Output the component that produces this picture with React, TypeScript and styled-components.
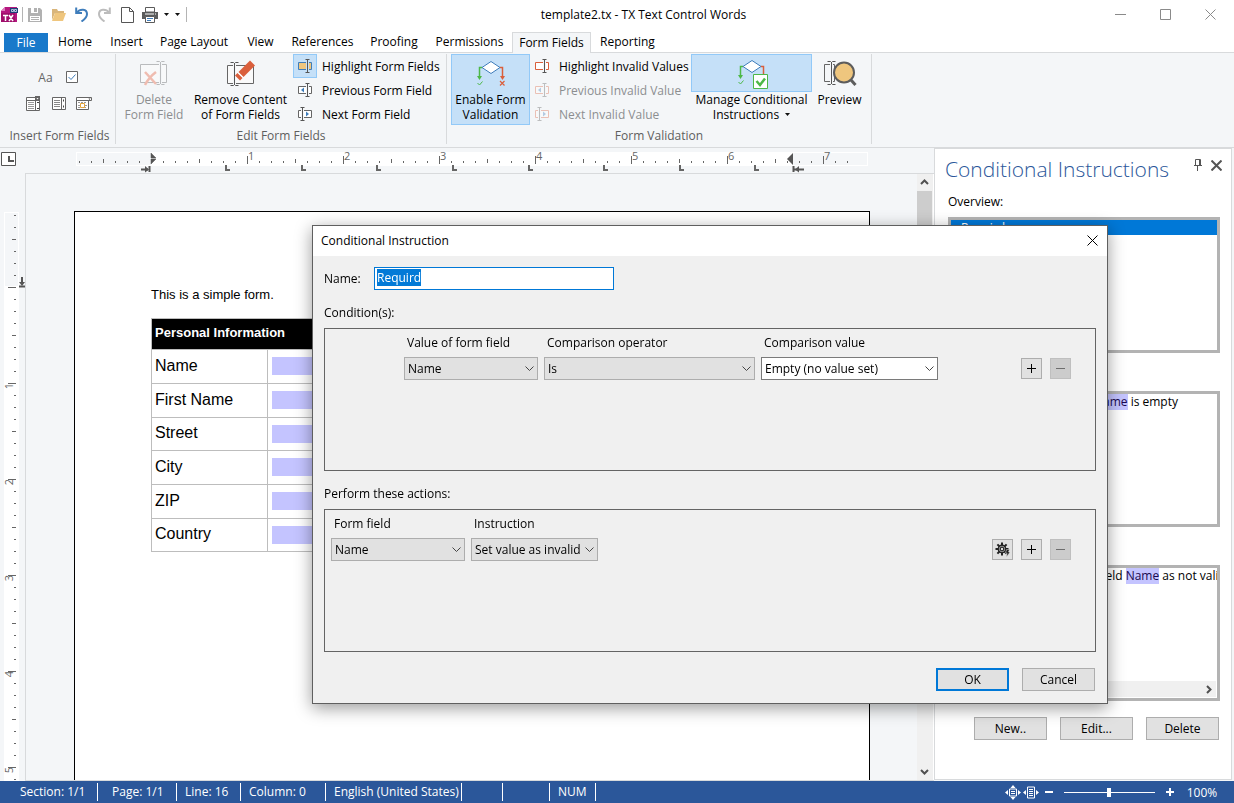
import React, { useEffect, useRef } from "react";
import styled, { createGlobalStyle, css } from "styled-components";

const ui = '"Open Sans", "Noto Sans", sans-serif';
const doc = '"Liberation Sans", Arial, sans-serif';

const GlobalStyle = createGlobalStyle`
  *, *::before, *::after { box-sizing: border-box; }
  body { margin: 0; overflow: hidden; background: #f4f6f8; }
  body, button, input, select { font-family: ${ui}; font-size: 12px; line-height: 15px; color: #000; }
  button { padding: 0; margin: 0; border: 0; background: none; }
  svg { display: block; flex: none; }
  p, h1, h2 { margin: 0; font-weight: 400; font-size: 12px; }
`;

/* ---------- window frame ---------- */

const Window = styled.div`
  height: 100vh;
  display: flex;
  flex-direction: column;
`;

const TitleBar = styled.header`
  height: 29px;
  flex: none;
  display: flex;
  align-items: center;
  background: #fff;
`;

const QuickAccess = styled.div`
  width: 190px;
  display: flex;
  align-items: center;
`;

const QuickButton = styled.button<{ $w: number }>`
  width: ${(p) => p.$w}px;
  height: 24px;
  display: flex;
  align-items: center;
  justify-content: center;
`;

const QuickLine = styled.span<{ $gap: number }>`
  width: 1px;
  height: 15px;
  margin: 0 ${(p) => p.$gap}px;
  background: #b4b4b4;
`;

const WindowTitle = styled.h1`
  flex: 1;
  text-align: center;
  white-space: nowrap;
`;

const WindowButtons = styled.div`
  display: flex;
  width: 137px;
  padding-left: 1px;
`;

const WindowButton = styled.button`
  width: 45px;
  height: 28px;
  display: flex;
  align-items: center;
  justify-content: center;
`;

const TabStrip = styled.nav`
  height: 24px;
  flex: none;
  display: flex;
  align-items: flex-end;
  padding-left: 4px;
  background: #fff;
  box-shadow: inset 0 -1px #d8dadc;
`;

const Tab = styled.button<{ $w: number; $kind?: "file" | "active" }>`
  width: ${(p) => p.$w}px;
  height: 21px;
  padding-bottom: 2px;
  white-space: nowrap;
  ${(p) =>
    p.$kind === "file" &&
    css`
      height: 19px;
      padding-bottom: 0;
      margin-bottom: 1px;
      color: #fff;
      background: #1979ca;
    `}
  ${(p) =>
    p.$kind === "active" &&
    css`
      border: 1px solid #d8dadc;
      border-bottom: 0;
      background: #f4f6f8;
    `}
`;

/* ---------- ribbon ---------- */

const Ribbon = styled.section`
  height: 95px;
  flex: none;
  display: flex;
  padding-left: 4px;
  background: #f4f6f8;
  border-bottom: 1px solid #d8dadc;
`;

const Group = styled.div<{ $w: number }>`
  width: ${(p) => p.$w}px;
  height: 90px;
  margin-top: 1px;
  display: flex;
  flex-direction: column;
  border-right: 1px solid #d8dadc;
`;

const GroupBody = styled.div`
  height: 74px;
  display: flex;
  padding-left: 4px;
`;

const GroupLabel = styled.p`
  text-align: center;
  color: #5e5e5e;
  white-space: nowrap;
`;

const InsertGrid = styled.div`
  display: grid;
  grid-template-columns: 25px 25px 25px;
  grid-template-rows: 26px 26px;
  place-items: center;
  padding: 10px 0 0 13px;
`;

const InsertPair = styled.div`
  grid-column: 1 / -1;
  width: 42px;
  display: flex;
  align-items: center;
  justify-content: space-between;
`;

const InsertButton = styled.button`
  height: 22px;
  min-width: 16px;
  display: flex;
  align-items: center;
  justify-content: center;
  color: #666;
`;

const LargeButton = styled.button<{ $w: number; $pressed?: boolean }>`
  width: ${(p) => p.$w}px;
  height: 71px;
  display: flex;
  flex-direction: column;
  align-items: center;
  border: 1px solid ${(p) => (p.$pressed ? "#92c9f8" : "transparent")};
  background: ${(p) => (p.$pressed ? "#c5e0f8" : "transparent")};
  white-space: nowrap;
  &:disabled { color: #8c8e90; }
`;

const LargeIcon = styled.span<{ $split?: boolean }>`
  height: 37px;
  width: 100%;
  margin: ${(p) => (p.$split ? "-1px -1px 0" : "0")};
  display: flex;
  align-items: center;
  justify-content: center;
  ${(p) =>
    p.$split &&
    css`
      width: 121px;
      height: 38px;
      flex: none;
      border: 1px solid #92c9f8;
      background: #c5e0f8;
    `}
`;

const SmallColumn = styled.div<{ $w: number }>`
  width: ${(p) => p.$w}px;
  display: flex;
  flex-direction: column;
`;

const SmallButton = styled.button`
  height: 24px;
  display: flex;
  align-items: center;
  gap: 5px;
  white-space: nowrap;
  &:disabled { color: #8c8e90; }
`;

const SmallIcon = styled.span<{ $pressed?: boolean }>`
  width: 24px;
  height: 24px;
  display: flex;
  align-items: center;
  justify-content: center;
  border: 1px solid ${(p) => (p.$pressed ? "#92c9f8" : "transparent")};
  background: ${(p) => (p.$pressed ? "#c5e0f8" : "transparent")};
`;

const WithCaret = styled.span`
  display: flex;
  align-items: center;
  gap: 6px;
`;

/* ---------- workspace ---------- */

const Workspace = styled.main`
  flex: 1;
  min-height: 0;
  display: flex;
  padding-right: 2px;
`;

const Editor = styled.section`
  flex: 1;
  min-width: 0;
  display: grid;
  grid-template-columns: 25px 1fr;
  grid-template-rows: 25px 1fr;
  overflow: hidden;
`;

const RulerCorner = styled.div`
  padding: 4px 0 0 1px;
`;

const RulerTrack = styled.div`
  overflow: hidden;
`;

const Canvas = styled.div`
  display: flex;
  min-height: 0;
  border: 1px solid #d8dadc;
  border-right: 0;
`;

const PageArea = styled.div`
  flex: 1;
  overflow: hidden;
  padding: 37px 47px 0 48px;
`;

const Page = styled.article`
  height: 1056px;
  padding: 75px 76px;
  border: 1px solid #000;
  background: #fff;
  font-family: ${doc};
`;

const Paragraph = styled.p`
  font-size: 13px;
  line-height: 15px;
  padding-bottom: 16px;
`;

const FormTable = styled.table`
  width: 100%;
  border-collapse: collapse;
  font-family: ${doc};
  font-size: 16px;
  line-height: 20px;
  th, td { border: 1px solid #bdbdbd; padding: 0 4px 1px; text-align: left; font-weight: 400; }
  thead th { height: 31px; padding: 0 3px 2px; background: #000; color: #fff; font-size: 13px; font-weight: 700; }
  tbody th { width: 116px; height: 34px; padding: 0 3px 2px; }
  tbody tr:nth-child(3n) th { height: 33px; }
`;

const FormField = styled.input`
  display: block;
  width: 100%;
  height: 18px;
  border: 0;
  border-radius: 0;
  background: #c4c4ff;
`;

const VScroll = styled.div`
  width: 17px;
  display: flex;
  flex-direction: column;
  justify-content: space-between;
  background: #f0f0f0;
  border-right: 1px solid #fff;
`;

const ScrollArrow = styled.button`
  height: 17px;
  width: 15px;
  display: flex;
  align-items: center;
  justify-content: center;
`;

const ScrollThumb = styled.div`
  height: 300px;
  width: 15px;
  background: #cdcdcd;
  margin-bottom: auto;
`;

/* ---------- side panel ---------- */

const SidePanel = styled.aside`
  width: 298px;
  flex: none;
  display: flex;
  flex-direction: column;
  margin-bottom: 1px;
  padding: 6px 12px 0 13px;
  border: 1px solid #d8dadc;
  background: #fff;
`;

const PanelHead = styled.div`
  display: flex;
  margin: 0 -7px 0 -3px;
  height: 32px;
`;

const PanelTitle = styled.h2`
  flex: 1;
  font-size: 21px;
  line-height: 29px;
  font-weight: 300;
  color: #2b579a;
  white-space: nowrap;
`;

const PanelTool = styled.button`
  width: 19px;
  height: 20px;
  display: flex;
  align-items: center;
  justify-content: center;
`;

const PanelLabel = styled.p`
  height: 38px;
  padding-top: 15px;
  line-height: 15px;
  &:first-of-type { height: 30px; padding-top: 7px; }
`;

const PanelBox = styled.div`
  position: relative;
  height: 136px;
  margin: 0 -1px 0 0;
  border: 3px solid #b3b3b3;
  background: #fff;
  overflow: hidden;
  white-space: nowrap;
`;

const PanelItem = styled.div`
  height: 15px;
  padding-left: 10px;
  background: #0078d7;
  color: #fff;
`;

const Rule = styled.p`
  height: 17px;
  padding: 0 0 0 6px;
  line-height: 16px;
`;

const FieldMark = styled.mark`
  background: #c4c4ff;
  color: #1a0a50;
`;

const HScroll = styled.div`
  position: absolute;
  left: 0;
  right: 1px;
  bottom: 1px;
  height: 16px;
  display: flex;
  justify-content: flex-end;
  background: #f0f0f0;
`;

const ButtonRow = styled.div`
  display: flex;
  justify-content: flex-end;
  gap: 13px;
`;

const PanelActions = styled(ButtonRow)`
  margin-top: 16px;
`;

const PushButton = styled.button<{ $default?: boolean }>`
  width: 73px;
  height: 23px;
  border: ${(p) => (p.$default ? "2px solid #0078d7" : "1px solid #adadad")};
  background: #e1e1e1;
`;

/* ---------- dialog ---------- */

const Dialog = styled.section`
  position: fixed;
  top: 225px;
  left: 312px;
  right: 126px;
  border: 1px solid #5f5f5f;
  background: #f0f0f0;
  box-shadow: 0 4px 16px rgba(0, 0, 0, 0.4);
`;

const DialogHead = styled.div`
  height: 30px;
  display: flex;
  align-items: center;
  justify-content: space-between;
  padding: 0 0 2px 8px;
  background: #fff;
`;

const DialogClose = styled.button`
  width: 29px;
  height: 28px;
  display: flex;
  align-items: center;
  justify-content: center;
`;

const DialogBody = styled.div`
  padding: 11px 11px 12px;
`;

const NameRow = styled.div`
  height: 23px;
  display: flex;
  align-items: center;
  label { width: 50px; }
`;

const NameInput = styled.input`
  width: 240px;
  height: 23px;
  padding: 0 2px 3px;
  border: 1px solid #0078d7;
  border-radius: 0;
  background: #fff;
  outline: none;
  &::selection { background: rgba(0, 120, 215, 0.99); color: #fff; }
`;

const SectionTitle = styled.h2`
  height: 38px;
  padding-top: 15px;
  line-height: 15px;
`;

const Frame = styled.div<{ $indent: number }>`
  height: 143px;
  display: flex;
  align-items: flex-start;
  gap: 6px;
  padding: 6px 24px 0 ${(p) => p.$indent}px;
  border: 1px solid #646464;
`;

const Picker = styled.div<{ $w: number }>`
  width: ${(p) => p.$w}px;
  label { display: block; height: 22px; padding-left: 3px; line-height: 16px; white-space: nowrap; }
`;

const SelectBox = styled.div`
  position: relative;
  svg { position: absolute; right: 4px; top: 9px; pointer-events: none; }
`;

const Select = styled.select<{ $editable?: boolean }>`
  appearance: none;
  display: block;
  width: 100%;
  height: 23px;
  padding: 0 13px 0 3px;
  border: 1px solid ${(p) => (p.$editable ? "#7a7a7a" : "#adadad")};
  border-radius: 0;
  background: ${(p) => (p.$editable ? "#fff" : "#e1e1e1")};
`;

const RowTools = styled.div`
  margin-left: auto;
  padding-top: 23px;
  display: flex;
  gap: 8px;
`;

const ToolButton = styled.button`
  width: 21px;
  height: 21px;
  display: flex;
  align-items: center;
  justify-content: center;
  border: 1px solid #adadad;
  background: #e1e1e1;
  &:disabled { background: #cccccc; border-color: #bfbfbf; }
`;

const DialogActions = styled(ButtonRow)`
  padding: 16px 1px 0 0;
`;

/* ---------- status bar ---------- */

const StatusBar = styled.footer`
  height: 22px;
  flex: none;
  display: flex;
  align-items: center;
  background: #2b579a;
  color: #fff;
`;

const StatusCell = styled.span<{ $w: number; $pad?: number }>`
  width: ${(p) => p.$w}px;
  height: 18px;
  padding-left: ${(p) => p.$pad ?? 8}px;
  border-right: 1px solid #fff;
  line-height: 18px;
  white-space: nowrap;
`;

const ZoomTools = styled.div`
  margin-left: auto;
  display: flex;
  align-items: center;
  padding-right: 9px;
`;

const ZoomButton = styled.button<{ $w: number }>`
  width: ${(p) => p.$w}px;
  height: 20px;
  display: flex;
  align-items: center;
  justify-content: center;
`;

const ZoomSlider = styled.input`
  appearance: none;
  width: 91px;
  height: 20px;
  margin: 0 6px;
  background: linear-gradient(#fff, #fff) center / 100% 1px no-repeat;
  &::-webkit-slider-thumb { appearance: none; width: 4px; height: 9px; background: #fff; }
`;

const ZoomValue = styled.span`
  width: 46px;
  text-align: center;
`;

/* ---------- icons ---------- */

const AppLogo = () => (
  <svg width="17" height="16" viewBox="0 0 17 16">
    <path d="M4 0h12v15H0V4z" fill="#b5177f" />
    <path d="M0 6h14v9H0z" fill="#a00f6c" />
    <path d="M4 0v4H0z" fill="#dd7dbd" />
    <rect x="9" y="1" width="8" height="5" fill="#1d3f77" />
    <path d="M10.500 2.500h2v2h-2zM13.500 2.500h2v2h-2z" fill="none" stroke="#d5e2f5" strokeWidth="0.800" />
    <path d="M2 8.500h5M4.500 8.500v5.500M8 8l4 6M12 8l-4 6" stroke="#fff" strokeWidth="1.500" />
  </svg>
);

const SaveIcon = () => (
  <svg width="14" height="14" viewBox="0 0 14 14">
    <path d="M0 0h12l2 2v12H0z" fill="#b1b1b1" />
    <path d="M3 0h7v5H3z" fill="#fff" />
    <path d="M6 0h3v4H6z" fill="#b1b1b1" />
    <path d="M2 8h10v5H2z" fill="#fff" />
    <path d="M3 9.500h8M3 11.500h8" stroke="#b1b1b1" />
  </svg>
);

const FolderIcon = () => (
  <svg width="14" height="12" viewBox="0 0 14 12">
    <path d="M0 0h5l1 2h6v2H3L0 11z" fill="#d9b57a" />
    <path d="M3 4h11l-3 8H0z" fill="#efc67e" />
  </svg>
);

const UndoIcon = ({ color, flip }: { color: string; flip?: boolean }) => (
  <svg width="14" height="15" viewBox="0 0 14 15">
    <g transform={flip ? "matrix(-1 0 0 1 14 0)" : undefined} fill="none" stroke={color} strokeWidth="2">
      <path d="M2 5.500C5 1.500 12 1.500 12 7c0 3.500-2.500 5.500-5.500 7.500" />
      <path d="M1.200 0.500v5.500h5.800" />
    </g>
  </svg>
);

const NewPageIcon = () => (
  <svg width="13" height="16" viewBox="0 0 13 16">
    <path d="M0.500 0.500h8l4 4v11h-12zM8.500 0.500v4h4" fill="#fff" stroke="#555" />
  </svg>
);

const PrintIcon = () => (
  <svg width="16" height="16" viewBox="0 0 16 16">
    <path d="M0 5h16v7H0z" fill="#5b5b5b" />
    <path d="M3.500 0.500h9v4.500h-9z" fill="#fff" stroke="#5b5b5b" />
    <path d="M3 7h9" stroke="#fff" />
    <path d="M13 7h1" stroke="#fff" />
    <path d="M3.500 9.500h9v6h-9z" fill="#fff" stroke="#5b5b5b" />
    <path d="M5 11.500h6M5 13.500h4" stroke="#3f7dbb" />
  </svg>
);

const CaretIcon = () => (
  <svg width="5" height="3" viewBox="0 0 5 3">
    <path d="M0 0h5L2.500 3z" fill="#111" />
  </svg>
);

const MinimizeIcon = () => (
  <svg width="11" height="11" viewBox="0 0 11 11">
    <path d="M0 5.500h11" stroke="#8a8a8a" />
  </svg>
);

const MaximizeIcon = () => (
  <svg width="11" height="11" viewBox="0 0 11 11">
    <path d="M0.500 0.500h10v10h-10z" fill="none" stroke="#8a8a8a" />
  </svg>
);

const CrossIcon = ({ size = 11, color = "#8a8a8a", width = 1 }) => (
  <svg width={size} height={size} viewBox="0 0 11 11">
    <path d="M0.500 0.500l10 10M10.500 0.500l-10 10" fill="none" stroke={color} strokeWidth={width} />
  </svg>
);

const CheckFieldIcon = () => (
  <svg width="12" height="12" viewBox="0 0 12 12">
    <path d="M0.500 0.500h11v11h-11z" fill="#fff" stroke="#666" />
    <path d="M2.500 6l2.500 2.500 4.500-5" fill="none" stroke="#3f7dbb" />
  </svg>
);

const ComboFieldIcon = () => (
  <svg width="15" height="15" viewBox="0 0 15 15">
    <path d="M0.500 1.500h13v13h-13zM0 4.500h14M9.500 4v10" fill="#fff" stroke="#666" />
    <path d="M9 0h5v5H9z" fill="#666" />
    <path d="M10.500 2h2l-1 1.500z" fill="#fff" />
    <path d="M2 6.500h6M2 8.500h6M2 10.500h6M2 12.500h6" stroke="#999" />
    <path d="M11 6.500h2M11 12.500h2" stroke="#444" />
  </svg>
);

const ListFieldIcon = () => (
  <svg width="14" height="13" viewBox="0 0 14 13">
    <path d="M0.500 0.500h13v12h-13zM9.500 0v12" fill="#fff" stroke="#666" />
    <path d="M2 3.500h6M2 5.500h6M2 7.500h6M2 9.500h6" stroke="#888" />
    <path d="M11 3.500h1M11 9.500h1" stroke="#444" strokeWidth="2" />
  </svg>
);

const DateFieldIcon = () => (
  <svg width="16" height="13" viewBox="0 0 16 13">
    <path d="M0.500 0.500h15v3h-15zM0.500 3.500h12v9h-12z" fill="#fff" stroke="#666" />
    <path d="M12.500 1.500h2l-1 1.500z" fill="#444" />
    <path d="M2 5.500h9M2 8.500h2M2 10.500h9M9 8.500h2" stroke="#999" strokeDasharray="2 1" />
    <path d="M4.500 6.500h4v4h-4z" fill="#fff" stroke="#e5a53c" />
  </svg>
);

type FieldIconProps = {
  frame?: string;
  fill?: string;
  back?: string;
  arrow?: "left" | "right";
  faded?: boolean;
};

const FieldIcon = ({ frame = "#666", fill = "#fff", back = "#f4f6f8", arrow, faded }: FieldIconProps) => {
  const bar = arrow === "right" ? 4.5 : 9.5;
  return (
    <svg width="14" height="14" viewBox="0 0 14 14" opacity={faded ? 0.35 : 1}>
      <path d="M0.500 3.500h13v7h-13z" fill={fill} stroke={frame} />
      <path d={`M${bar} 2v10`} stroke={back} strokeWidth="3" />
      <path d={`M${bar} 1v12M${bar - 2} 0.500h4M${bar - 2} 13.500h4`} stroke="#555" />
      {arrow === "left" && <path d="M6 4.500v5L3 7z" fill="#3f7dbb" />}
      {arrow === "right" && <path d="M8 4.500v5l3-2.500z" fill="#3f7dbb" />}
    </svg>
  );
};

const DeleteFieldIcon = () => (
  <svg width="32" height="28" viewBox="0 0 32 28">
    <path d="M2.500 4.500h26v18h-26z" fill="#f8f9fa" stroke="#b9bbbd" />
    <path d="M22.500 2v23" stroke="#f4f6f8" strokeWidth="3" />
    <path d="M22.500 2v22M18.500 1.500h3l1 1 1-1h3M18.500 24.500h3l1-1 1 1h3" fill="none" stroke="#b9bbbd" />
    <path d="M7 12l11 12M18 12c-4 3-8 7-11 13" stroke="#efbcb0" strokeWidth="2.500" fill="none" />
  </svg>
);

const RemoveContentIcon = () => (
  <svg width="32" height="28" viewBox="0 0 32 28">
    <path d="M2.500 5.500h26v18h-26z" fill="#fafafa" stroke="#666" />
    <path d="M9.500 3v22" stroke="#f4f6f8" strokeWidth="3" />
    <path d="M9.500 3v22M5.500 2.500h3l1 1 1-1h3M5.500 25.500h3l1-1 1 1h3" fill="none" stroke="#555" />
    <path d="M25 0.500l5 5-11.500 11.500-5-5z" fill="#da5f3c" />
    <path d="M12.500 13l5 5-2.500 2.500-5-5z" fill="#da5f3c" />
    <path d="M13 12.500l5 5" stroke="#fff" />
  </svg>
);

const FlowIcon = ({ managed }: { managed?: boolean }) => (
  <svg width="32" height="32" viewBox="0 0 32 32">
    <path d="M7 9.500H4.500V20" fill="none" stroke="#4db848" strokeWidth="1.500" />
    <path d="M2 18h5l-2.500 4z" fill="#4db848" />
    <path d="M2.500 25l2 2 3-3.500" fill="none" stroke="#4db848" />
    <path d="M25 9.500h2.500V20" fill="none" stroke="#da5f3c" strokeWidth="1.500" />
    {!managed && <path d="M25 18h5l-2.500 4z" fill="#da5f3c" />}
    {!managed && <path d="M25 23l4.500 4.500M29.500 23L25 27.500" stroke="#da5f3c" strokeWidth="1.200" />}
    <path d="M7 9.500L16 3.500l9 6-9 6z" fill="#fff" stroke="#3f7dbb" />
    {managed && (
      <>
        <path d="M17.500 17.500h14v14h-14z" fill="#fff" stroke="#4db848" />
        <path d="M20.500 24l3.500 4 5-6.500" fill="none" stroke="#4db848" strokeWidth="2.500" />
      </>
    )}
  </svg>
);

const PreviewIcon = () => (
  <svg width="34" height="28" viewBox="0 0 34 28">
    <path d="M1.500 4.500h10v17h-10z" fill="none" stroke="#666" />
    <path d="M8.500 2v22" stroke="#f4f6f8" strokeWidth="3" />
    <path d="M8.500 2v22M4.500 1.500h3l1 1 1-1h3M4.500 24.500h3l1-1 1 1h3" fill="none" stroke="#555" />
    <circle cx="21" cy="12.500" r="10" fill="#efc67e" stroke="#5d5d5d" strokeWidth="2" />
    <path d="M28 20l4.500 5" stroke="#5d5d5d" strokeWidth="3" />
  </svg>
);

const TabStopIcon = () => (
  <svg width="15" height="14" viewBox="0 0 15 14">
    <path d="M0.500 0.500h14v13h-14z" fill="#fff" stroke="#555" />
    <path d="M8 4v5h5" fill="none" stroke="#555" strokeWidth="2" />
  </svg>
);

const ChevronDown = () => (
  <svg width="9" height="6" viewBox="0 0 9 6">
    <path d="M0.500 0.500l4 4 4-4" fill="none" stroke="#444" />
  </svg>
);

const ScrollChevron = ({ turn }: { turn: number }) => (
  <svg width="9" height="9" viewBox="0 0 9 9">
    <path d="M1 6l3.500-3.500L8 6" fill="none" stroke="#505050" strokeWidth="2" transform={`rotate(${turn} 4.500 4.500)`} />
  </svg>
);

const PinIcon = () => (
  <svg width="8" height="12" viewBox="0 0 8 12">
    <path d="M1.500 0.500h5v6h-5zM0 6.500h8M3.500 7v5" fill="none" stroke="#555" />
    <path d="M5.500 1v5" stroke="#555" />
  </svg>
);

const PlusIcon = () => (
  <svg width="9" height="9" viewBox="0 0 9 9">
    <path d="M0 4.500h9M4.500 0v9" stroke="#000" />
  </svg>
);

const MinusIcon = () => (
  <svg width="9" height="9" viewBox="0 0 9 9">
    <path d="M0 4.500h9" stroke="#6d6d6d" />
  </svg>
);

const GearIcon = () => (
  <svg width="15" height="15" viewBox="0 0 15 15">
    <circle cx="7" cy="7" r="2.800" fill="none" stroke="#222" strokeWidth="3.200" />
    <circle cx="7" cy="7" r="2.800" fill="none" stroke="#e1e1e1" strokeWidth="0.600" />
    <path
      d="M7 0.500v3M7 10.500v3M0.500 7h3M10.500 7h3M2.400 2.400l2.100 2.100M9.500 9.500l2.100 2.100M2.400 11.600l2.100-2.100M9.500 4.500l2.100-2.100"
      stroke="#222"
      strokeWidth="2"
    />
    <path d="M11.500 7.500h3l-1 2.500H15l-3.500 5 0.500-4h-1.500z" fill="#222" stroke="#e1e1e1" strokeWidth="0.500" />
  </svg>
);

const FitIcon = ({ vertical }: { vertical?: boolean }) => (
  <svg width="16" height="15" viewBox="0 0 16 15">
    <path d={vertical ? "M4.500 4h7v7h-7z" : "M4.500 2h7v11h-7z"} fill="none" stroke="#fff" />
    <path d={vertical ? "M6 6.500h4M6 8.500h4" : "M6 4.500h4M6 6.500h4M6 8.500h4M6 10.500h4"} stroke="#fff" />
    <path d="M3 5v5L0 7.500zM13 5v5l3-2.500z" fill="#fff" />
    {vertical && <path d="M5.500 3h5L8 0zM5.500 12h5L8 15z" fill="#fff" />}
  </svg>
);

const ZoomSign = ({ plus }: { plus?: boolean }) => (
  <svg width="8" height="8" viewBox="0 0 8 8">
    <path d={plus ? "M0 4h8M4 0v8" : "M0 4h8"} stroke="#fff" strokeWidth="2" />
  </svg>
);

/* ---------- rulers ---------- */

const steps = (from: number, to: number) => {
  const out: { at: number; size: number }[] = [];
  for (let i = from; i <= to; i++) {
    if (i === 0) continue;
    out.push({ at: i * 12, size: i % 8 === 0 ? 8 : i % 4 === 0 ? 4 : 2 });
  }
  return out;
};

const tabStops = [74, 150, 225, 301, 377, 452, 528, 603];

const HorizontalRuler = () => (
  <svg width="860" height="25" viewBox="-126 0 860 25">
    <rect x="-75" y="4" width="792" height="14" fill="#fff" />
    <rect x="-74" y="5" width="74" height="12" fill="#f4f6f8" />
    <rect x="642" y="5" width="74" height="12" fill="#f4f6f8" />
    <g fill="#666">
      {steps(-6, 58).map((t) => (
        <rect key={t.at} x={t.at} y={15 - t.size + (t.size === 8 ? 1 : 0)} width="1" height={t.size} />
      ))}
    </g>
    <g fill="#666" fontFamily={ui} fontSize="11">
      {[1, 2, 3, 4, 5, 6, 7].map((n) => (
        <text key={n} x={n * 96 + 1} y="12">{n}</text>
      ))}
    </g>
    <path d="M0 5l5 5H0zM0 16l5-5H0z" fill="#555" stroke="#555" strokeWidth="0.500" />
    <path d="M642 5v12l-6-6z" fill="#555" />
    <path d="M-10 21.500h7M-1.500 18v6" stroke="#555" strokeWidth="2" />
    <path d="M-6 18l4 3.500-4 3z" fill="#555" />
    <path d="M643 21.500h10M642.500 18v6" stroke="#555" strokeWidth="2" />
    <path d="M648 18l-4 3.500 4 3z" fill="#555" />
    {tabStops.map((x) => (
      <path key={x} d={`M${x + 1} 17v5h4`} fill="none" stroke="#666" strokeWidth="2" />
    ))}
  </svg>
);

const VerticalRuler = () => (
  <svg width="25" height="608" viewBox="0 -114 25 608">
    <rect x="4" y="-75" width="15" height="700" fill="#fff" />
    <rect x="5" y="-74" width="13" height="73" fill="#f4f6f8" />
    <g fill="#666">
      <rect x="8" y="0" width="8" height="1" />
      {steps(-6, 41).map((t) => (
        <rect key={t.at} x={16 - t.size} y={t.at} width={t.size} height="1" />
      ))}
    </g>
    <g fill="#666" fontFamily={ui} fontSize="11" textAnchor="end">
      {[1, 2, 3, 4, 5].map((n) => (
        <text key={n} transform={`translate(13 ${n * 96}) rotate(-90)`}>{n}</text>
      ))}
    </g>
    <path d="M22 -10v6M19 -0.500h6" stroke="#555" strokeWidth="2" />
    <path d="M19 -5h6l-3 4z" fill="#555" />
  </svg>
);

/* ---------- composed parts ---------- */

type ComboProps = { id: string; label: string; value: string; width: number; editable?: boolean };

const Combo = ({ id, label, value, width, editable }: ComboProps) => (
  <Picker $w={width}>
    <label htmlFor={id}>{label}</label>
    <SelectBox>
      <Select id={id} $editable={editable} defaultValue={value}>
        <option>{value}</option>
      </Select>
      <ChevronDown />
    </SelectBox>
  </Picker>
);

const tabs: { name: string; w: number; kind?: "file" | "active" }[] = [
  { name: "File", w: 44, kind: "file" },
  { name: "Home", w: 54 },
  { name: "Insert", w: 49 },
  { name: "Page Layout", w: 86 },
  { name: "View", w: 47 },
  { name: "References", w: 77 },
  { name: "Proofing", w: 66 },
  { name: "Permissions", w: 85 },
  { name: "Form Fields", w: 79, kind: "active" },
  { name: "Reporting", w: 73 },
];

const rows = ["Name", "First Name", "Street", "City", "ZIP", "Country"];

const RibbonBar = () => (
  <Ribbon>
    <Group $w={112}>
      <GroupBody>
        <InsertGrid>
          <InsertPair>
            <InsertButton>Aa</InsertButton>
            <InsertButton aria-label="Check box"><CheckFieldIcon /></InsertButton>
          </InsertPair>
          <InsertButton aria-label="Combo box"><ComboFieldIcon /></InsertButton>
          <InsertButton aria-label="Drop-down list"><ListFieldIcon /></InsertButton>
          <InsertButton aria-label="Date picker"><DateFieldIcon /></InsertButton>
        </InsertGrid>
      </GroupBody>
      <GroupLabel>Insert Form Fields</GroupLabel>
    </Group>

    <Group $w={331}>
      <GroupBody>
        <LargeButton $w={68} disabled>
          <LargeIcon><DeleteFieldIcon /></LargeIcon>
          <span>Delete</span>
          <span>Form Field</span>
        </LargeButton>
        <LargeButton $w={105}>
          <LargeIcon><RemoveContentIcon /></LargeIcon>
          <span>Remove Content</span>
          <span>of Form Fields</span>
        </LargeButton>
        <SmallColumn $w={150}>
          <SmallButton>
            <SmallIcon $pressed><FieldIcon frame="#3f7dbb" fill="#efc67e" back="#c5e0f8" /></SmallIcon>
            Highlight Form Fields
          </SmallButton>
          <SmallButton>
            <SmallIcon><FieldIcon arrow="left" /></SmallIcon>
            Previous Form Field
          </SmallButton>
          <SmallButton>
            <SmallIcon><FieldIcon arrow="right" /></SmallIcon>
            Next Form Field
          </SmallButton>
        </SmallColumn>
      </GroupBody>
      <GroupLabel>Edit Form Fields</GroupLabel>
    </Group>

    <Group $w={425}>
      <GroupBody>
        <LargeButton $w={79} $pressed>
          <LargeIcon><FlowIcon /></LargeIcon>
          <span>Enable Form</span>
          <span>Validation</span>
        </LargeButton>
        <SmallColumn $w={161}>
          <SmallButton>
            <SmallIcon><FieldIcon frame="#da5f3c" /></SmallIcon>
            Highlight Invalid Values
          </SmallButton>
          <SmallButton disabled>
            <SmallIcon><FieldIcon frame="#da5f3c" arrow="left" faded /></SmallIcon>
            Previous Invalid Value
          </SmallButton>
          <SmallButton disabled>
            <SmallIcon><FieldIcon frame="#da5f3c" arrow="right" faded /></SmallIcon>
            Next Invalid Value
          </SmallButton>
        </SmallColumn>
        <LargeButton $w={121}>
          <LargeIcon $split><FlowIcon managed /></LargeIcon>
          <span>Manage Conditional</span>
          <WithCaret>Instructions <CaretIcon /></WithCaret>
        </LargeButton>
        <LargeButton $w={55}>
          <LargeIcon><PreviewIcon /></LargeIcon>
          <span>Preview</span>
        </LargeButton>
      </GroupBody>
      <GroupLabel>Form Validation</GroupLabel>
    </Group>
  </Ribbon>
);

const DocumentEditor = () => (
  <Editor>
    <RulerCorner><TabStopIcon /></RulerCorner>
    <RulerTrack><HorizontalRuler /></RulerTrack>
    <RulerTrack><VerticalRuler /></RulerTrack>
    <Canvas>
      <PageArea>
        <Page>
          <Paragraph>This is a simple form.</Paragraph>
          <FormTable>
            <thead>
              <tr><th colSpan={2}>Personal Information</th></tr>
            </thead>
            <tbody>
              {rows.map((name) => (
                <tr key={name}>
                  <th scope="row">{name}</th>
                  <td><FormField aria-label={name} /></td>
                </tr>
              ))}
            </tbody>
          </FormTable>
        </Page>
      </PageArea>
      <VScroll>
        <ScrollArrow aria-label="Scroll up"><ScrollChevron turn={0} /></ScrollArrow>
        <ScrollThumb />
        <ScrollArrow aria-label="Scroll down"><ScrollChevron turn={180} /></ScrollArrow>
      </VScroll>
    </Canvas>
  </Editor>
);

const InstructionsPanel = () => (
  <SidePanel>
    <PanelHead>
      <PanelTitle>Conditional Instructions</PanelTitle>
      <PanelTool aria-label="Pin"><PinIcon /></PanelTool>
      <PanelTool aria-label="Close panel"><CrossIcon color="#555" width={2} /></PanelTool>
    </PanelHead>
    <PanelLabel>Overview:</PanelLabel>
    <PanelBox>
      <PanelItem>Requird</PanelItem>
    </PanelBox>
    <PanelLabel>Conditions:</PanelLabel>
    <PanelBox>
      <Rule>If the value of form field <FieldMark>Name</FieldMark> is empty</Rule>
    </PanelBox>
    <PanelLabel>Instructions:</PanelLabel>
    <PanelBox>
      <Rule>Set the value of the form field <FieldMark>Name</FieldMark> as not valid.</Rule>
      <HScroll>
        <ScrollArrow aria-label="Scroll right"><ScrollChevron turn={90} /></ScrollArrow>
      </HScroll>
    </PanelBox>
    <PanelActions>
      <PushButton>New..</PushButton>
      <PushButton>Edit...</PushButton>
      <PushButton>Delete</PushButton>
    </PanelActions>
  </SidePanel>
);

const InstructionDialog = () => {
  const nameRef = useRef<HTMLInputElement>(null);
  useEffect(() => {
    nameRef.current?.focus();
    nameRef.current?.select();
  }, []);
  return (
    <Dialog role="dialog" aria-labelledby="dialog-title">
      <DialogHead>
        <h2 id="dialog-title">Conditional Instruction</h2>
        <DialogClose aria-label="Close"><CrossIcon color="#000" /></DialogClose>
      </DialogHead>
      <DialogBody>
        <NameRow>
          <label htmlFor="name">Name:</label>
          <NameInput id="name" ref={nameRef} defaultValue="Requird" />
        </NameRow>
        <SectionTitle>Condition(s):</SectionTitle>
        <Frame $indent={79}>
          <Combo id="cond-field" label="Value of form field" value="Name" width={134} />
          <Combo id="cond-op" label="Comparison operator" value="Is" width={211} />
          <Combo id="cond-value" label="Comparison value" value="Empty (no value set)" width={177} editable />
          <RowTools>
            <ToolButton aria-label="Add condition"><PlusIcon /></ToolButton>
            <ToolButton aria-label="Remove condition" disabled><MinusIcon /></ToolButton>
          </RowTools>
        </Frame>
        <SectionTitle>Perform these actions:</SectionTitle>
        <Frame $indent={6}>
          <Combo id="act-field" label="Form field" value="Name" width={134} />
          <Combo id="act-instr" label="Instruction" value="Set value as invalid" width={127} />
          <RowTools>
            <ToolButton aria-label="Action settings"><GearIcon /></ToolButton>
            <ToolButton aria-label="Add action"><PlusIcon /></ToolButton>
            <ToolButton aria-label="Remove action" disabled><MinusIcon /></ToolButton>
          </RowTools>
        </Frame>
        <DialogActions>
          <PushButton $default>OK</PushButton>
          <PushButton>Cancel</PushButton>
        </DialogActions>
      </DialogBody>
    </Dialog>
  );
};

export default function App() {
  return (
    <Window>
      <GlobalStyle />
      <TitleBar>
        <QuickAccess>
          <QuickButton $w={18} aria-label="Application"><AppLogo /></QuickButton>
          <QuickLine $gap={4} />
          <QuickButton $w={16} aria-label="Save"><SaveIcon /></QuickButton>
          <QuickButton $w={32} aria-label="Open"><FolderIcon /></QuickButton>
          <QuickButton $w={14} aria-label="Undo"><UndoIcon color="#3f7dbb" /></QuickButton>
          <QuickButton $w={30} aria-label="Redo"><UndoIcon color="#bcbcbc" flip /></QuickButton>
          <QuickButton $w={17} aria-label="New document"><NewPageIcon /></QuickButton>
          <QuickButton $w={28} aria-label="Print"><PrintIcon /></QuickButton>
          <QuickButton $w={5} aria-label="Print options"><CaretIcon /></QuickButton>
          <QuickButton $w={17} aria-label="Customize toolbar"><CaretIcon /></QuickButton>
          <QuickLine $gap={0} />
        </QuickAccess>
        <WindowTitle>template2.tx - TX Text Control Words</WindowTitle>
        <WindowButtons>
          <WindowButton aria-label="Minimize"><MinimizeIcon /></WindowButton>
          <WindowButton aria-label="Maximize"><MaximizeIcon /></WindowButton>
          <WindowButton aria-label="Close window"><CrossIcon /></WindowButton>
        </WindowButtons>
      </TitleBar>
      <TabStrip>
        {tabs.map((t) => (
          <Tab key={t.name} $w={t.w} $kind={t.kind}>{t.name}</Tab>
        ))}
      </TabStrip>
      <RibbonBar />
      <Workspace>
        <DocumentEditor />
        <InstructionsPanel />
      </Workspace>
      <StatusBar>
        <StatusCell $w={98} $pad={20}>Section: 1/1</StatusCell>
        <StatusCell $w={79} $pad={14}>Page: 1/1</StatusCell>
        <StatusCell $w={64}>Line: 16</StatusCell>
        <StatusCell $w={85}>Column: 0</StatusCell>
        <StatusCell $w={136}>English (United States)</StatusCell>
        <StatusCell $w={41} />
        <StatusCell $w={47} />
        <StatusCell $w={46}>NUM</StatusCell>
        <ZoomTools>
          <ZoomButton $w={18} aria-label="Fit page"><FitIcon vertical /></ZoomButton>
          <ZoomButton $w={18} aria-label="Fit width"><FitIcon /></ZoomButton>
          <ZoomButton $w={18} aria-label="Zoom out"><ZoomSign /></ZoomButton>
          <ZoomSlider type="range" min={0} max={100} defaultValue={49} aria-label="Zoom" />
          <ZoomButton $w={18} aria-label="Zoom in"><ZoomSign plus /></ZoomButton>
          <ZoomValue>100%</ZoomValue>
        </ZoomTools>
      </StatusBar>
      <InstructionDialog />
    </Window>
  );
}
